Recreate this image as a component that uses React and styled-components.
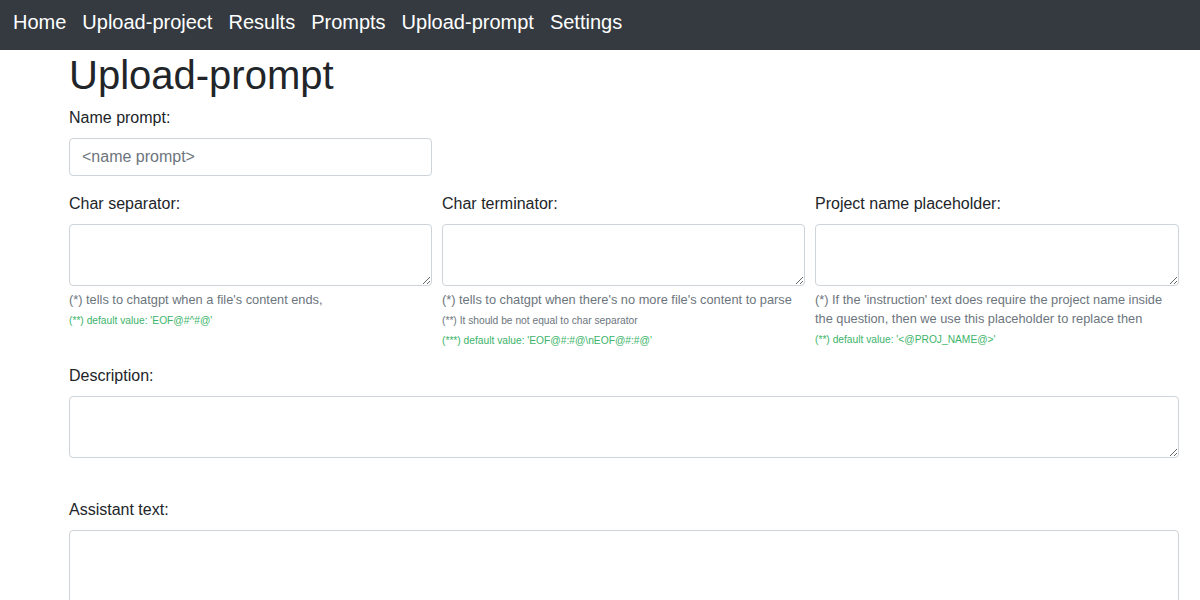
import React from 'react'
import styled, { createGlobalStyle } from 'styled-components'

const GlobalStyle = createGlobalStyle`
    body {
        margin: 0;
        background: #fff;
        font-family: "Liberation Sans", Arial, sans-serif;
        color: #212529;
    }
    * { box-sizing: border-box; }
`

const NavBar = styled.nav`
    height: 50px;
    background: #343a40;
    display: flex;
    align-items: center;
    padding: 0 5px;
`

const NavLink = styled.a`
    color: #fff;
    font-size: 20px;
    line-height: 24px;
    padding: 0 8px;
    text-decoration: none;
    margin-top: -6px;
`

const Container = styled.main`
    width: 1110px;
    margin-left: 69px;
`

const Title = styled.h1`
    font-size: 40px;
    font-weight: 400;
    line-height: 48px;
    margin: 1px 0 7px;
`

const Row = styled.div`
    display: grid;
    grid-template-columns: 363px 363px 1fr;
    column-gap: 10px;
`

const Group = styled.div`
    margin-bottom: ${p => p.$mb || 16}px;
`

const Label = styled.label`
    display: block;
    font-size: 16px;
    line-height: 24px;
    margin-bottom: 8px;
`

const Input = styled.input`
    display: block;
    width: 100%;
    height: 38px;
    padding: 6px 12px;
    font-size: 16px;
    font-family: inherit;
    color: #495057;
    border: 1px solid #ced4da;
    border-radius: 4px;
    &::placeholder { color: #6c757d; }
`

const TextArea = styled.textarea`
    display: block;
    width: 100%;
    height: ${p => p.$h || 62}px;
    padding: 6px 12px;
    font-size: 16px;
    line-height: 24px;
    font-family: inherit;
    border: 1px solid #ced4da;
    border-radius: 4px;
`

const Hint = styled.div`
    margin-top: 4px;
    font-size: 12.8px;
    line-height: 19.2px;
    color: #6c757d;
`

const Note = styled.div`
    margin-top: 4px;
    font-size: 10.24px;
    line-height: 16px;
    color: ${p => (p.$green ? '#3cb46a' : '#6c757d')};
`

const links = ['Home', 'Upload-project', 'Results', 'Prompts', 'Upload-prompt', 'Settings']

const App = () => (
    <>
        <GlobalStyle />
        <NavBar>
            {links.map(l => <NavLink key={l} href="#">{l}</NavLink>)}
        </NavBar>
        <Container>
            <Title>Upload-prompt</Title>
            <Row>
                <Group>
                    <Label>Name prompt:</Label>
                    <Input placeholder="<name prompt>" />
                </Group>
            </Row>
            <Row>
                <Group $mb={15}>
                    <Label>Char separator:</Label>
                    <TextArea />
                    <Hint>(*) tells to chatgpt when a file's content ends,</Hint>
                    <Note $green>(**) default value: 'EOF@#^#@'</Note>
                </Group>
                <Group $mb={15}>
                    <Label>Char terminator:</Label>
                    <TextArea />
                    <Hint>(*) tells to chatgpt when there's no more file's content to parse</Hint>
                    <Note>(**) It should be not equal to char separator</Note>
                    <Note $green>(***) default value: 'EOF@#:#@\nEOF@#:#@'</Note>
                </Group>
                <Group $mb={15}>
                    <Label>Project name placeholder:</Label>
                    <TextArea />
                    <Hint>(*) If the 'instruction' text does require the project name inside the question, then we use this placeholder to replace then</Hint>
                    <Note $green>(**) default value: '&lt;@PROJ_NAME@&gt;'</Note>
                </Group>
            </Row>
            <Group $mb={40}>
                <Label>Description:</Label>
                <TextArea />
            </Group>
            <Group>
                <Label>Assistant text:</Label>
                <TextArea $h={160} />
            </Group>
        </Container>
    </>
)

export default App
